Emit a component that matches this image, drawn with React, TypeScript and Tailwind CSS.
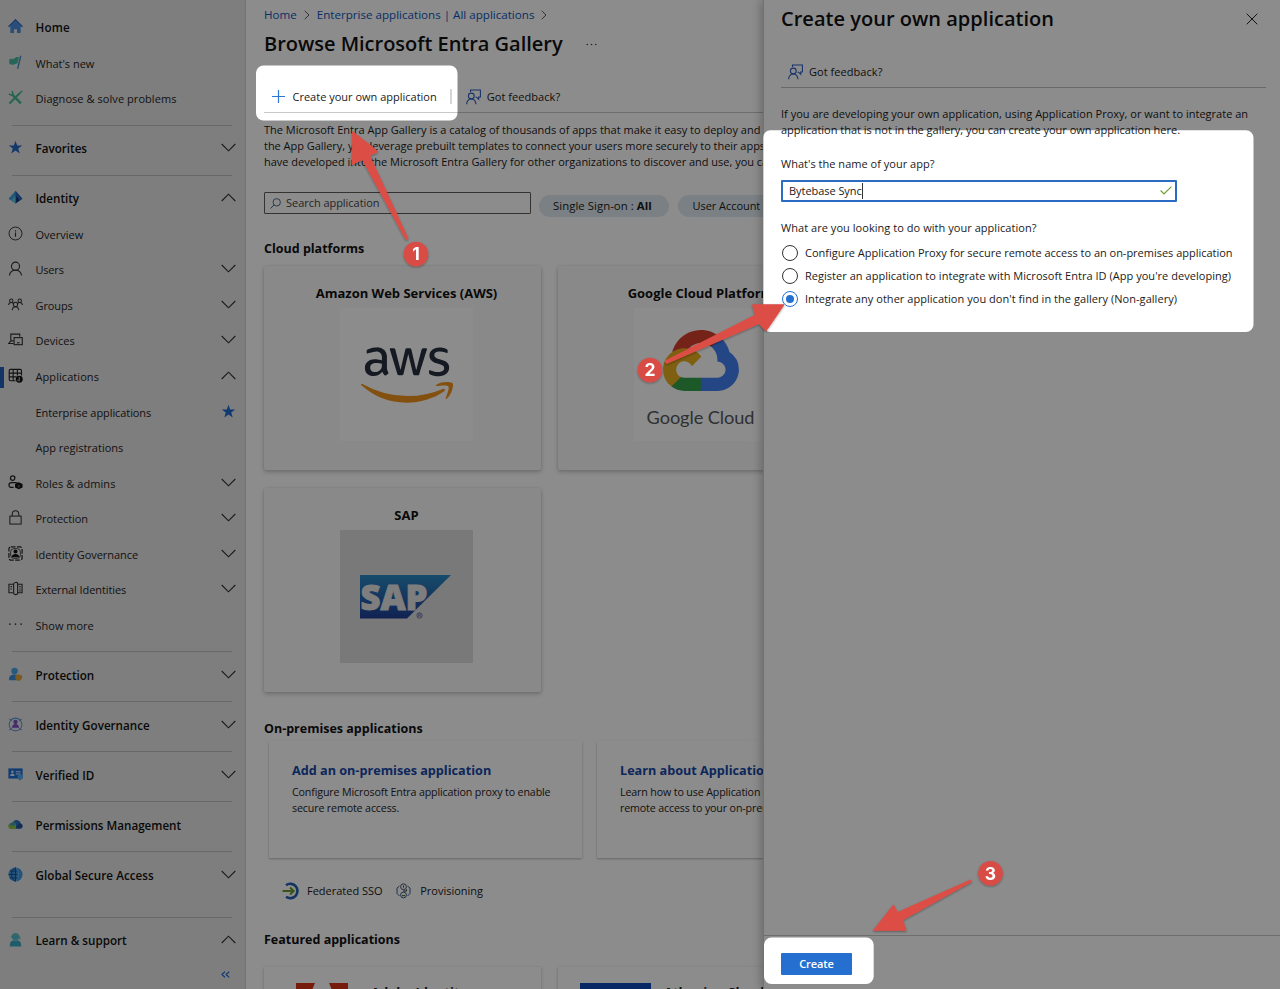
import React from "react";
import { FaAws } from "react-icons/fa";

function T({ c = "", children }: { c?: string; children: React.ReactNode }) {
  return <span className={`inline-block whitespace-nowrap ${c}`}>{children}</span>;
}

function Chevron({ up = false }: { up?: boolean }) {
  return (
    <svg width="15" height="9" viewBox="0 0 15 9" fill="none" stroke="#323130" strokeWidth="1.1" className="mr-[9px] -mt-[3px] shrink-0">
      <path d={up ? "M.7 8 7.5 1.2 14.3 8" : "M.7 1 7.5 7.8 14.3 1"} />
    </svg>
  );
}

const star = "M8 .8l1.8 5h5.4l-4.3 3.3 1.6 5.3L8 11.2l-4.5 3.2 1.6-5.3L.8 5.8h5.4z";

const icons: Record<string, React.ReactNode> = {
  home: <g><path d="M2.5 7.5 8 2.2l5.5 5.3V15H9.6v-4.2H6.4V15H2.5z" fill="#4b8ee0" /><path d="M.6 8.2 8 1l7.4 7.2" fill="none" stroke="#2f66c4" strokeWidth="1.5" /></g>,
  flag: <g><path d="M1.2 5.2C2.800 3 4.500 5 6.500 3.600c1.600-1.200 3.300-2 5.200-1.300L10 9c-1.900-.3-2.600 1-4.500 1.300-1.700.2-2.600-1-3.900-.300z" fill="#46b8a0" /><path d="M13.600.8 10.300 14.800" stroke="#3d8fc4" strokeWidth="1.500" /></g>,
  tools: <g fill="none" stroke="#46b894"><path d="M4 4.500 13.800 14.200" strokeWidth="2.600" /><path d="M1.600 14.300 12.600 3.300" strokeWidth="2.200" /><path d="M1 4c1.700 1.800 3.700 1.600 4-.2.200-1.200-.3-2.100-.9-2.700" strokeWidth="1.700" /><path d="M12.300 3.800 15.300.9" strokeWidth="1.400" /></g>,
  star: <path d={star} fill="#2566c4" />,
  identity: <g><path d="M8 .8 15.400 9.200 8 14.500.6 9.200z" fill="#3f9fd8" /><path d="M8 .8 15.400 9.200 8 14.500z" fill="#2a63b8" /><path d="M8 6 12.500 10.800 8 14z" fill="#17387f" /><path d="M8 6 3.500 10.800 8 14z" fill="#63c8ea" /></g>,
  info: <g fill="none" stroke="#323130" strokeWidth="1"><circle cx="8" cy="8" r="6.900" /><path d="M8 7v4.500M8 4.500v1.300" strokeWidth="1.200" /></g>,
  user: <g fill="none" stroke="#323130" strokeWidth="1.200"><circle cx="8" cy="5.500" r="4.300" /><path d="M1.500 15.500c.5-3.500 2.500-5.700 6.500-5.700s6 2.200 6.500 5.700" /></g>,
  groups: <g fill="none" stroke="#323130" strokeWidth="1.100"><circle cx="8" cy="8" r="2.300" /><path d="M4.500 14c.2-2.300 1.500-3.600 3.500-3.600s3.300 1.300 3.500 3.600" /><circle cx="3.500" cy="4" r="1.800" /><path d="M.6 8.500C.8 6.600 1.800 5.900 3.500 5.900S5.500 6.700 6 7M10 7c.5-.3.800-1.100 2.500-1.100s2.700.7 2.900 2.600" /><circle cx="12.500" cy="4" r="1.800" /></g>,
  devices: <g fill="none" stroke="#323130" strokeWidth="1.200"><path d="M3 10V2.200h9.500V5M6 12.200H.8L3 9.500h3" /><rect x="6.500" y="6" width="8.700" height="7.500" /><path d="M9.500 11.500h2.800" /></g>,
  apps: <g><path d="M1.300 2.800q0-1.300 1.300-1.300h10.500q1.300 0 1.300 1.300V8M8 13.600H2.600q-1.300 0-1.300-1.300V2.800M1.300 5.500h13M1.300 9.500H9M5.500 1.500v12M10 1.500V8" fill="none" stroke="#222" strokeWidth="1.200" /><circle cx="12" cy="12" r="3.700" fill="#111" /><path d="M12 9.700v4.300M10.600 12.500v1.500" stroke="#e6e6e6" strokeWidth=".9" /></g>,
  roles: <g><circle cx="5" cy="3.300" r="2.400" fill="none" stroke="#222" strokeWidth="1.300" /><path d="M6 13.200H3.800A2.400 2.400 0 0 1 1 11c0-2 1-2.800 2.800-2.800h4.400c1 0 1.500.2 2 .6" fill="none" stroke="#222" strokeWidth="1.300" /><path d="M11.500 7.800l4 1.700v3.800l-4 2-4-2V9.500z" fill="#111" /><path d="M10 11l1.500.8 1.500-.8M11.500 11.800v2" stroke="#999" strokeWidth=".7" fill="none" /></g>,
  lock: <g fill="none" stroke="#323130" strokeWidth="1.100"><rect x="2" y="6.500" width="12" height="8.500" /><path d="M4.500 6.500V4.200a3.500 3.500 0 0 1 7 0v2.300" /></g>,
  gov: <g><rect x="1" y="1" width="14" height="14" rx="2" fill="none" stroke="#222" strokeWidth="1.300" strokeDasharray="5 1.500" /><rect x="2.800" y="2.800" width="10.400" height="10.400" rx="3.500" fill="none" stroke="#333" strokeWidth=".9" /><circle cx="8" cy="5.800" r="2.100" fill="#111" /><path d="M4 12c.2-2.700 1.600-3.600 4-3.600s3.800.9 4 3.600z" fill="#111" /></g>,
  external: <g fill="none" stroke="#323130" strokeWidth="1.200"><path d="M5.500 3.500H1v9h4.500M10.500 3.500H15v9h-4.500" /><path d="M6 3c0-1.300 4.300-2.600 4.300 0v9.800c0 2.500-4.300 2-4.300 0M6 3v10" /><path d="M2.700 6h1.600M2.700 8.500h1.600M12 6h1.500M12 8.500h1.500M12 10.500h1.500" /></g>,
  dots: <g fill="#323130"><circle cx="2" cy="7.500" r=".9" /><circle cx="8" cy="7.500" r=".9" /><circle cx="14" cy="7.500" r=".9" /></g>,
  protection: <g><circle cx="7" cy="4.200" r="3.500" fill="#4aa3e8" /><path d="M1 14c0-4.200 2-6 6-6s6 1.800 6 6z" fill="#3b8fdc" /><path d="M11.300 7.800l3.700 1.300v2.300c0 1.600-1.300 2.600-3.700 3.400-2.400-.8-3.500-1.800-3.500-3.400V9.100z" fill="#e0a63a" /></g>,
  govColor: <g><circle cx="8" cy="8" r="6.800" fill="none" stroke="#5f92d0" strokeWidth="1.100" /><path d="M1.500 2 4 4.200M14.500 2 12 4.200M1.500 14 4 11.800M14.500 14 12 11.800" stroke="#5f92d0" strokeWidth="1.100" /><circle cx="8" cy="5.300" r="2.300" fill="#7a4fc8" /><path d="M4.200 11.500C4.400 8.700 5.800 7.500 8 7.500s3.600 1.200 3.800 4z" fill="#7a4fc8" /></g>,
  verified: <g><rect x=".4" y="1.500" width="15.200" height="10.800" fill="#1d6fd2" /><circle cx="4.700" cy="5" r="1.300" fill="#dbeafe" /><path d="M2.300 9.700c.1-2 .9-2.900 2.400-2.900s2.300.9 2.400 2.900zM8.300 4.500h5.200v1.100H8.300zM8.300 7h5.200v1.100H8.300z" fill="#dbeafe" /><path d="M12.800 7.500l2.800 1v2c0 1.700-1 2.900-2.800 4-1.800-1.100-2.500-2.300-2.500-4v-2z" fill="#52a8f0" /></g>,
  permissions: <g><path d="M8 12.500h5.200a2.800 2.800 0 0 0 .4-5.500A4.500 4.500 0 0 0 5.200 6z" fill="#20509f" /><path d="M6 4.600c2.700-2.400 6-.8 6.700 1.300L9.500 9.500 5 7z" fill="#2d72c8" /><path d="M3.300 12.700A2.800 2.800 0 0 1 2.900 7C4 5 7 5 8.200 7.500c.8 1.800.6 3.700.1 5.200z" fill="#8fc24b" /><path d="M1.800 8.500a3 3 0 0 1 3-2.600c1.800 0 2.700 1 3.200 2.400L5 9.600z" fill="#3f9fb8" /></g>,
  globe: <g><circle cx="8" cy="8" r="7.500" fill="#3f97e0" /><path d="M8 .6v15M.6 8H10M2 4.300h7.800M2 11.700h7.800M8 .6C2.300 4 2.300 12 8 15.400" fill="none" stroke="#174f96" strokeWidth="1" /><path d="M8 .6c4.500 3.500 4.500 11.300 0 14.800" fill="none" stroke="#7cc0f4" strokeWidth=".8" /></g>,
  support: <g><circle cx="8" cy="5" r="3.900" fill="#4fc0d0" /><path d="M3.300 6a4.800 4.800 0 0 1 9.300 0v2" fill="none" stroke="#7fb8b0" strokeWidth="1.200" /><path d="M1.800 15.400c0-4.200 1.500-6.400 3.500-6.400h5.400c2 0 3.500 2.200 3.500 6.400z" fill="#3aa6c4" /></g>,
};

function Icon({ name }: { name?: string }) {
  return (
    <svg width="15" height="15" viewBox="0 0 16 16" className="-mt-[3px] shrink-0">
      {name ? icons[name] : null}
    </svg>
  );
}

function Row({ icon, label, bold = false, end, active = false, c = "" }: { icon?: string; label: string; bold?: boolean; end?: "down" | "up" | "star"; active?: boolean; c?: string }) {
  return (
    <div className="flex h-[35.57px] items-center">
      <div className={active ? "h-[21px] w-[4px] bg-[#2062ba]" : "w-[4px]"} />
      <div className="ml-[3.5px] flex w-[28px]"><Icon name={icon} /></div>
      <div className="flex-1"><T c={`${bold ? "text-[11.65px] font-semibold text-[#111]" : "text-[#252423]"} ${c}`}>{label}</T></div>
      {end === "star" ? (
        <svg width="15" height="15" viewBox="0 0 16 16" className="-mt-[2px] mr-[9px]"><path d={star} fill="#1f68d0" /></svg>
      ) : end ? <Chevron up={end === "up"} /> : null}
    </div>
  );
}

function Sep({ extra = false }: { extra?: boolean }) {
  return <div className={`flex items-center ${extra ? "h-[30.4px] pt-[19px]" : "h-[14.35px] pt-[1.5px]"}`}><div className="ml-[12px] h-px w-[220px] bg-[#bdbdbd]" /></div>;
}

function Sidebar() {
  return (
    <aside className="h-full w-[246px] shrink-0 border-r border-[#d2d2d2] bg-[#e6e6e6] pt-[10.5px]">
      <Row icon="home" label="Home" bold c="tracking-[0.2px]" />
      <Row icon="flag" label="What's new" />
      <Row icon="tools" label="Diagnose & solve problems" c="tracking-[0.06px]" />
      <Sep />
      <Row icon="star" label="Favorites" bold end="down" />
      <Sep />
      <Row icon="identity" label="Identity" bold end="up" />
      <Row icon="info" label="Overview" />
      <Row icon="user" label="Users" end="down" c="tracking-[-0.2px]" />
      <Row icon="groups" label="Groups" end="down" c="tracking-[-0.12px]" />
      <Row icon="devices" label="Devices" end="down" />
      <Row icon="apps" label="Applications" end="up" active c="tracking-[0.07px]" />
      <Row label="Enterprise applications" end="star" c="tracking-[-0.08px]" />
      <Row label="App registrations" />
      <Row icon="roles" label="Roles & admins" end="down" c="tracking-[0.06px]" />
      <Row icon="lock" label="Protection" end="down" c="tracking-[-0.06px]" />
      <Row icon="gov" label="Identity Governance" end="down" c="tracking-[-0.05px]" />
      <Row icon="external" label="External Identities" end="down" c="tracking-[-0.1px]" />
      <Row icon="dots" label="Show more" />
      <Sep />
      <Row icon="protection" label="Protection" bold end="down" />
      <Sep />
      <Row icon="govColor" label="Identity Governance" bold end="down" />
      <Sep />
      <Row icon="verified" label="Verified ID" bold end="down" />
      <Sep />
      <Row icon="permissions" label="Permissions Management" bold />
      <Sep />
      <Row icon="globe" label="Global Secure Access" bold end="down" c="tracking-[0.04px]" />
      <Sep extra />
      <Row icon="support" label="Learn & support" bold end="up" />
      <svg width="9" height="7" viewBox="0 0 9 7" fill="none" stroke="#1f68d0" strokeWidth="1.3" className="ml-[221px] mt-[12px]">
        <path d="M4 .6 1 3.500 4 6.400M8.200.6l-3 2.900 3 2.900" />
      </svg>
    </aside>
  );
}

function Feedback() {
  return (
    <svg width="15" height="16" viewBox="0 0 15 16" fill="none" stroke="#2b5fc0" strokeWidth="1.1" className="shrink-0">
      <path d="M4.500 3V1h9.900v7h-1.700v2.200L10.500 8.200H9.500" />
      <circle cx="5.300" cy="7" r="2.900" />
      <path d="M.6 15.300c.3-3.300 2-5.300 4.700-5.300s4.400 2 4.700 5.300" />
    </svg>
  );
}

function Crumb() {
  return <svg width="6" height="10" viewBox="0 0 6 10" fill="none" stroke="#605e5c" strokeWidth="1"><path d="M.7.8 5 5 .7 9.200" /></svg>;
}

function Heading({ className, children }: { className: string; children: React.ReactNode }) {
  return <h2 className={`h-[16px] text-[12.5px] font-bold leading-[16px] text-[#111] ${className}`}>{children}</h2>;
}

function Card({ title, children }: { title: string; children: React.ReactNode }) {
  return (
    <div className="flex h-[204px] w-[276.5px] shrink-0 flex-col items-center rounded-[2px] bg-[#fafafa] pl-[8.5px] pt-[19.5px] shadow-[0_2px_4px_rgba(0,0,0,0.22),0_0_3px_rgba(0,0,0,0.08)]">
      <div className="h-[16px] whitespace-nowrap text-[13px] font-bold leading-[16px] text-[#111]">{title}</div>
      <div className="mt-[7px]">{children}</div>
    </div>
  );
}

function Promo({ title, lines }: { title: string; lines: string[] }) {
  return (
    <div className="h-[117px] w-[312.500px] shrink-0 bg-white pl-[23px] pt-[21.5px] shadow-[0_1px_2px_rgba(0,0,0,0.28)]">
      <div className="h-[16px] whitespace-nowrap text-[12.65px] font-bold leading-[16px] text-[#1747a6]">{title}</div>
      <div className="mt-[5.5px] text-[10.7px] leading-[16px] tracking-[-0.15px] text-[#252423]">
        {lines.map((l) => <div key={l} className="whitespace-nowrap">{l}</div>)}
      </div>
    </div>
  );
}

function Main() {
  return (
    <main className="h-full w-[517px] shrink-0 overflow-hidden bg-white pl-[18px] text-[#1b1a19]">
      <div className="flex h-[29px] items-center text-[11.6px] text-[#0f56b8]">
        <T>Home</T><span className="mx-[7px]"><Crumb /></span>
        <T>Enterprise applications | All applications</T><span className="ml-[7px]"><Crumb /></span>
      </div>
      <div className="flex h-[28px] items-center">
        <h1 className="mt-[1.5px] text-[20px] font-semibold leading-[28px] tracking-[-0.02px] text-[#111]"><T>Browse Microsoft Entra Gallery</T></h1>
        <svg width="11" height="3" viewBox="0 0 11 3" fill="#444" className="ml-[23px] mt-[2px]"><circle cx="1.200" cy="1.500" r=".8" /><circle cx="5.500" cy="1.500" r=".8" /><circle cx="9.800" cy="1.500" r=".8" /></svg>
      </div>
      <div className="mt-[25px] flex h-[31px] items-center border-b border-[#c8c8c8] pb-px pl-[8px]">
        <svg width="13" height="13" viewBox="0 0 13 13" stroke="#2b76d2" strokeWidth="1.2" className="mr-[7.5px]"><path d="M6.500 0v13M0 6.500h13" /></svg>
        <T>Create your own application</T>
        <div className="ml-[13.5px] mr-[14px] h-[15px] w-[1.5px] bg-[#d6d6d6]" />
        <Feedback />
        <T c="ml-[6px] tracking-[0.05px]">Got feedback?</T>
      </div>
      <div className="mt-[9px] leading-[16px]">
        <div className="whitespace-nowrap"><T>The Microsoft Entra App Gallery is a catalog of thousands of apps that make it easy to deploy and</T> configure</div>
        <div className="whitespace-nowrap tracking-[-0.036px]"><T>the App Gallery, you leverage prebuilt templates to connect your users more securely to their apps</T>. If you</div>
        <div className="whitespace-nowrap tracking-[-0.018px]"><T>have developed into the Microsoft Entra Gallery for other organizations to discover and use, you</T> can</div>
      </div>
      <div className="mt-[22px] flex h-[22px] items-start">
        <div className="flex h-[22px] w-[267px] shrink-0 items-center rounded-[1px] border border-[#605e5c] pl-[5px] text-[#484644]">
          <svg width="11" height="11" viewBox="0 0 11 11" fill="none" stroke="#4a6c8c" strokeWidth="1" className="mr-[5px]"><circle cx="6.700" cy="4.300" r="3.700" /><path d="M4 7 .5 10.500" /></svg>
          <T c="tracking-[-0.04px]">Search application</T>
        </div>
        <div className="ml-[8px] mt-[3px] flex h-[22px] w-[130px] shrink-0 items-center rounded-full bg-[#dfeaf0] pl-[14px] text-[11.4px]"><T c="tracking-[0.03px]">Single Sign-on : <b>All</b></T></div>
        <div className="ml-[9px] mt-[3px] flex h-[22px] w-[240px] shrink-0 items-center rounded-full bg-[#dfeaf0] pl-[14.5px]"><T c="tracking-[-0.05px]">User Account</T></div>
      </div>
      <Heading className="mt-[26.6px]">Cloud platforms</Heading>
      <div className="mt-[9.4px] flex gap-[17.5px]">
        <Card title="Amazon Web Services (AWS)">
          <div className="flex h-[133px] w-[133px] items-center justify-center bg-white">
            <svg width="0" height="0" className="absolute"><defs><linearGradient id="awsFill" x1="0" y1="0" x2="0" y2="1"><stop offset=".57" stopColor="#252f3e" /><stop offset=".57" stopColor="#f0931c" /></linearGradient></defs></svg>
            <FaAws className="h-[74px] w-[92px]" fill="url(#awsFill)" />
          </div>
        </Card>
        <Card title="Google Cloud Platform">
          <div className="flex h-[133px] w-[133px] flex-col items-center bg-white pt-[21.5px]">
            <svg width="76" height="61" viewBox="0 0 256 206">
              <path fill="#d6402f" d="M170.252 56.819l22.253-22.253 1.483-9.370C153.437-11.677 88.976-7.496 52.420 33.920 42.267 45.423 34.734 59.764 30.717 74.573l7.970-1.123 44.505-7.340 3.436-3.513c19.797-21.742 53.270-24.667 76.128-6.168l7.496.390z" />
              <path fill="#4280f0" d="M224.205 73.918a100.249 100.249 0 0 0-30.217-48.722l-31.232 31.232a55.515 55.515 0 0 1 20.379 44.037v5.544c15.350 0 27.797 12.445 27.797 27.796 0 15.352-12.446 27.485-27.797 27.485h-55.671l-5.466 5.934v33.340l5.466 5.231h55.670c39.930.311 72.553-31.494 72.864-71.424a72.303 72.303 0 0 0-31.793-60.453" />
              <path fill="#34a04a" d="M71.870 205.796h55.593V161.290H71.870a27.275 27.275 0 0 1-11.400-2.498l-7.887 2.420-22.409 22.253-1.952 7.574c12.567 9.489 27.900 14.825 43.647 14.757" />
              <path fill="#e8ae1e" d="M71.870 61.425C31.940 61.663-.237 94.227.001 134.157a72.300 72.300 0 0 0 28.221 56.880l32.248-32.247c-13.990-6.322-20.208-22.786-13.887-36.776 6.320-13.990 22.786-20.208 36.775-13.888a27.796 27.796 0 0 1 13.887 13.888l32.248-32.248A72.224 72.224 0 0 0 71.870 61.425" />
            </svg>
            <div className="mt-[13.5px] whitespace-nowrap font-['Lato'] text-[18.2px] leading-[26px] tracking-[-0.08px] text-[#55585c]">Google Cloud</div>
          </div>
        </Card>
      </div>
      <div className="mt-[18px]">
        <Card title="SAP">
          <div className="flex h-[133px] w-[133px] items-center justify-center bg-[#dcdcdc]">
            <svg width="94" height="46" viewBox="0 0 94 46" className="mr-[2px]">
              <defs><linearGradient id="sapFill" x1="0" y1="0" x2="0" y2="1"><stop offset="0" stopColor="#2a8ac4" /><stop offset="1" stopColor="#1f3f96" /></linearGradient></defs>
              <path d="M1 1h91L48 44.500H1z" fill="url(#sapFill)" />
              <text x="1.500" y="36" fontFamily="Open Sans" fontWeight="800" fontSize="36" textLength="67" lengthAdjust="spacingAndGlyphs" stroke="#e6e6e6" strokeWidth="1" fill="#e6e6e6">SAP</text>
              <circle cx="60.500" cy="41.500" r="2.700" fill="none" stroke="#5d5d9c" strokeWidth=".8" />
              <path d="M59.500 43.200v-3.400h1.300q1 0 1 .9t-1 .9h-1.200M60.700 41.600l1.200 1.600" fill="none" stroke="#5d5d9c" strokeWidth=".6" />
            </svg>
          </div>
        </Card>
      </div>
      <Heading className="mt-[29.5px]">On-premises applications</Heading>
      <div className="mt-[3.5px] flex gap-[15.5px] pl-[5px]">
        <Promo title="Add an on-premises application" lines={["Configure Microsoft Entra application proxy to enable", "secure remote access."]} />
        <Promo title="Learn about Application Proxy" lines={["Learn how to use Application Proxy to provide secure", "remote access to your on-premises applications."]} />
      </div>
      <div className="mt-[24px] flex h-[19px] items-center pl-[18px]">
        <svg width="18" height="18" viewBox="0 0 18 18" fill="none"><path d="M4 3.200A7.200 7.200 0 1 1 4 14.800" stroke="#1f62b0" strokeWidth="2.6" /><path d="M.5 9h11M8 5.500 11.700 9 8 12.500" stroke="#6b9a2a" strokeWidth="2" /></svg>
        <T c="ml-[7px]">Federated SSO</T>
        <svg width="15" height="16" viewBox="0 0 15 16" fill="none" stroke="#3b5f8c" strokeWidth="1" className="ml-[13.5px]"><path d="M3.500 3 1 5v5.500L3.500 13M11.500 3 14 5v5.500L11.500 13" /><circle cx="7.500" cy="3.700" r="2.900" stroke="#44506a" /><circle cx="7.500" cy="12" r="2.900" /><path d="M7.500 2.500v2M7 8h3.500V6.500M6 12.500h3" stroke="#333" /><path d="M6.200 12.800h2.600" stroke="#6b9a2a" /></svg>
        <T c="ml-[9px]">Provisioning</T>
      </div>
      <Heading className="mt-[31px]">Featured applications</Heading>
      <div className="mt-[19px] flex gap-[17.5px]">
        <div className="flex h-[120px] w-[276.5px] shrink-0 bg-white pl-[32px] pt-[16.5px] shadow-[0_1px_3px_rgba(0,0,0,0.25)]">
          <svg width="52" height="52" viewBox="0 0 52 52" fill="#d93416"><path d="M0 0h19L0 46zM33 0h19v46z" /></svg>
          <div className="ml-[23px] mt-px whitespace-nowrap text-[13px] font-bold leading-[16px]">Adobe Identity</div>
        </div>
        <div className="flex h-[120px] w-[276.5px] shrink-0 bg-white pl-[22px] pt-[16.5px] shadow-[0_1px_3px_rgba(0,0,0,0.25)]">
          <div className="h-[71px] w-[71px] bg-[#1048b8]" />
          <div className="ml-[13px] mt-px whitespace-nowrap text-[13px] font-bold leading-[16px]">Atlassian Cloud</div>
        </div>
      </div>
    </main>
  );
}

function Radio({ label, checked = false, c = "" }: { label: string; checked?: boolean; c?: string }) {
  return (
    <div className="flex h-[23.1px] items-center">
      <div className={`flex h-[16px] w-[16px] items-center justify-center rounded-full border ${checked ? "border-[#2470d0]" : "border-[#323130]"}`}>
        {checked ? <div className="h-[8px] w-[8px] rounded-full bg-[#2470d0]" /> : null}
      </div>
      <T c={`ml-[7px] ${c}`}>{label}</T>
    </div>
  );
}

function Panel() {
  return (
    <section className="flex h-full w-[517px] shrink-0 flex-col border-l border-[#d0d0d0] bg-white text-[#1b1a19] shadow-[-3px_0_8px_rgba(0,0,0,0.22)]">
      <div className="flex-1 pl-[17px] pr-[14px]">
        <div className="flex h-[37px] items-center justify-between">
          <h2 className="text-[20px] font-semibold leading-[28px] tracking-[0.02px] text-[#111]"><T>Create your own application</T></h2>
          <svg width="12" height="12" viewBox="0 0 12 12" stroke="#222" strokeWidth="1" className="mr-[8.5px]"><path d="M.7.7 11.300 11.300M11.300.7.7 11.300" /></svg>
        </div>
        <div className="mt-[19px] flex h-[32px] items-center border-b border-[#bdbdbd] pl-[7px]">
          <Feedback />
          <T c="ml-[6px] tracking-[0.05px]">Got feedback?</T>
        </div>
        <div className="mt-[18px] leading-[16px]">
          <div><T c="tracking-[0.01px]">If you are developing your own application, using Application Proxy, or want to integrate an</T></div>
          <div><T c="tracking-[-0.015px]">application that is not in the gallery, you can create your own application here.</T></div>
        </div>
        <div className="mt-[17.5px] leading-[16px]"><T c="tracking-[0.02px]">What's the name of your app?</T></div>
        <div className="mt-[8.5px] flex h-[21.5px] w-[396px] items-center rounded-[1px] border-2 border-[#2a6cc4] pl-[6px] pr-[3px]">
          <T c="tracking-[-0.05px]">Bytebase Sync</T>
          <div className="h-[16px] w-px bg-[#333]" />
          <svg width="12" height="9" viewBox="0 0 12 9" fill="none" stroke="#6fa02c" strokeWidth="1.2" className="ml-auto"><path d="M.6 4.500 4 7.900 11.400.6" /></svg>
        </div>
        <div className="mt-[18.5px] leading-[16px]"><T c="tracking-[0.045px]">What are you looking to do with your application?</T></div>
        <div className="mt-[5px] pl-px">
          <Radio label="Configure Application Proxy for secure remote access to an on-premises application" c="tracking-[-0.016px]" />
          <Radio label="Register an application to integrate with Microsoft Entra ID (App you're developing)" c="tracking-[0.033px]" />
          <Radio label="Integrate any other application you don't find in the gallery (Non-gallery)" checked c="tracking-[0.04px]" />
        </div>
      </div>
      <div className="h-[54px] border-t border-[#c8c8c8] pl-[17px] pt-[17px]">
        <button className="flex h-[22px] w-[71px] items-center justify-center rounded-[1px] bg-[#246fcf] font-semibold text-white"><T c="tracking-[-0.1px]">Create</T></button>
      </div>
    </section>
  );
}

function Badge({ x, y, n }: { x: number; y: number; n: string }) {
  return (
    <g>
      <circle cx={x} cy={y} r="12.300" fill="#d94c44" />
      <text x={x} y={y + 6.2} textAnchor="middle" fontFamily="Inter" fontWeight="700" fontSize="17.5" fill="#fff">{n}</text>
    </g>
  );
}

function Annotations() {
  return (
    <svg width="1280" height="989" viewBox="0 0 1280 989" className="pointer-events-none absolute inset-0">
      <defs>
        <mask id="spots">
          <rect width="1280" height="989" fill="#fff" />
          <rect x="256" y="65.500" width="201.500" height="55" rx="7.500" fill="#000" />
          <rect x="763" y="130.300" width="490.500" height="201.700" rx="7.500" fill="#000" />
          <rect x="764" y="937.500" width="109.700" height="46.500" rx="7.500" fill="#000" />
        </mask>
        <filter id="soft" x="-20%" y="-20%" width="140%" height="140%"><feDropShadow dx="0" dy="1" stdDeviation="1.2" floodOpacity=".35" /></filter>
      </defs>
      <rect width="1280" height="989" fill="#000" fillOpacity=".45" mask="url(#spots)" />
      <g fill="#dc4e45" stroke="#dc4e45" strokeWidth="1" strokeLinejoin="round" filter="url(#soft)">
        <path d="M352.500 131.500 378 151.500 369.500 155.500 408 238.500 406 239.500 362.500 159.500 352 164.500z" />
        <path d="M784 304.800 752.500 304.800 755.500 315 665 361 666.500 363.500 759 323.500 766 331z" />
        <path d="M873.500 930.300 893.500 905 897.500 912.500 970.500 880 971.500 881.500 902.500 920 906 930.300z" />
      </g>
      <g filter="url(#soft)">
        <Badge x={416} y={254} n="1" />
        <Badge x={650} y={370} n="2" />
        <Badge x={990.5} y={873.3} n="3" />
      </g>
    </svg>
  );
}

export default function App() {
  return (
    <div className="relative flex h-[989px] w-[1280px] overflow-hidden bg-white font-['Open_Sans','Noto_Sans',sans-serif] text-[11px] leading-[16px]">
      <Sidebar />
      <Main />
      <Panel />
      <Annotations />
    </div>
  );
}
